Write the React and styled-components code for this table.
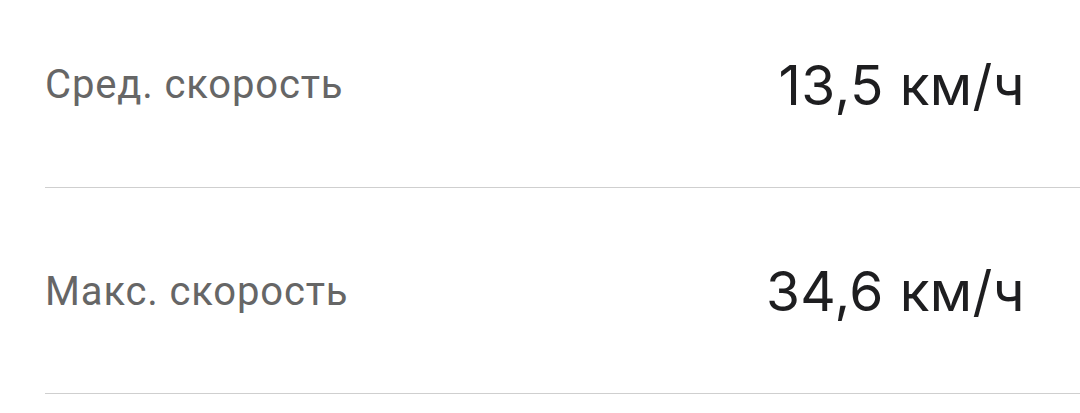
import React from "react";
import styled, { createGlobalStyle } from "styled-components";

const Global = createGlobalStyle`
  html, body {
    margin: 0;
    padding: 0;
    background: #fff;
    overflow: hidden;
  }
`;

const List = styled.div`
  margin-top: -19px;
  padding-left: 45px;
`;

const Row = styled.div`
  height: 203.5px;
  display: flex;
  align-items: center;
  justify-content: space-between;
  padding-right: 55px;
  padding-top: 2px;
  border-bottom: 1.5px solid #cfcfcf;
  box-sizing: content-box;
`;

const Label = styled.span`
  font-family: Roboto, "Noto Sans", sans-serif;
  font-size: 40px;
  color: #666666;
  letter-spacing: 0.85px;
`;

const Value = styled.span`
  font-family: Inter, Roboto, sans-serif;
  font-size: 55px;
  color: #1e1e20;
  letter-spacing: 0.4px;
`;

const stats = [
  { label: "Сред. скорость", value: "13,5 км/ч" },
  { label: "Макс. скорость", value: "34,6 км/ч" },
];

const App = () => {
  return (
    <>
      <Global />
      <List>
        {stats.map((s) => (
          <Row key={s.label}>
            <Label>{s.label}</Label>
            <Value>{s.value}</Value>
          </Row>
        ))}
      </List>
    </>
  );
};

export default App;
